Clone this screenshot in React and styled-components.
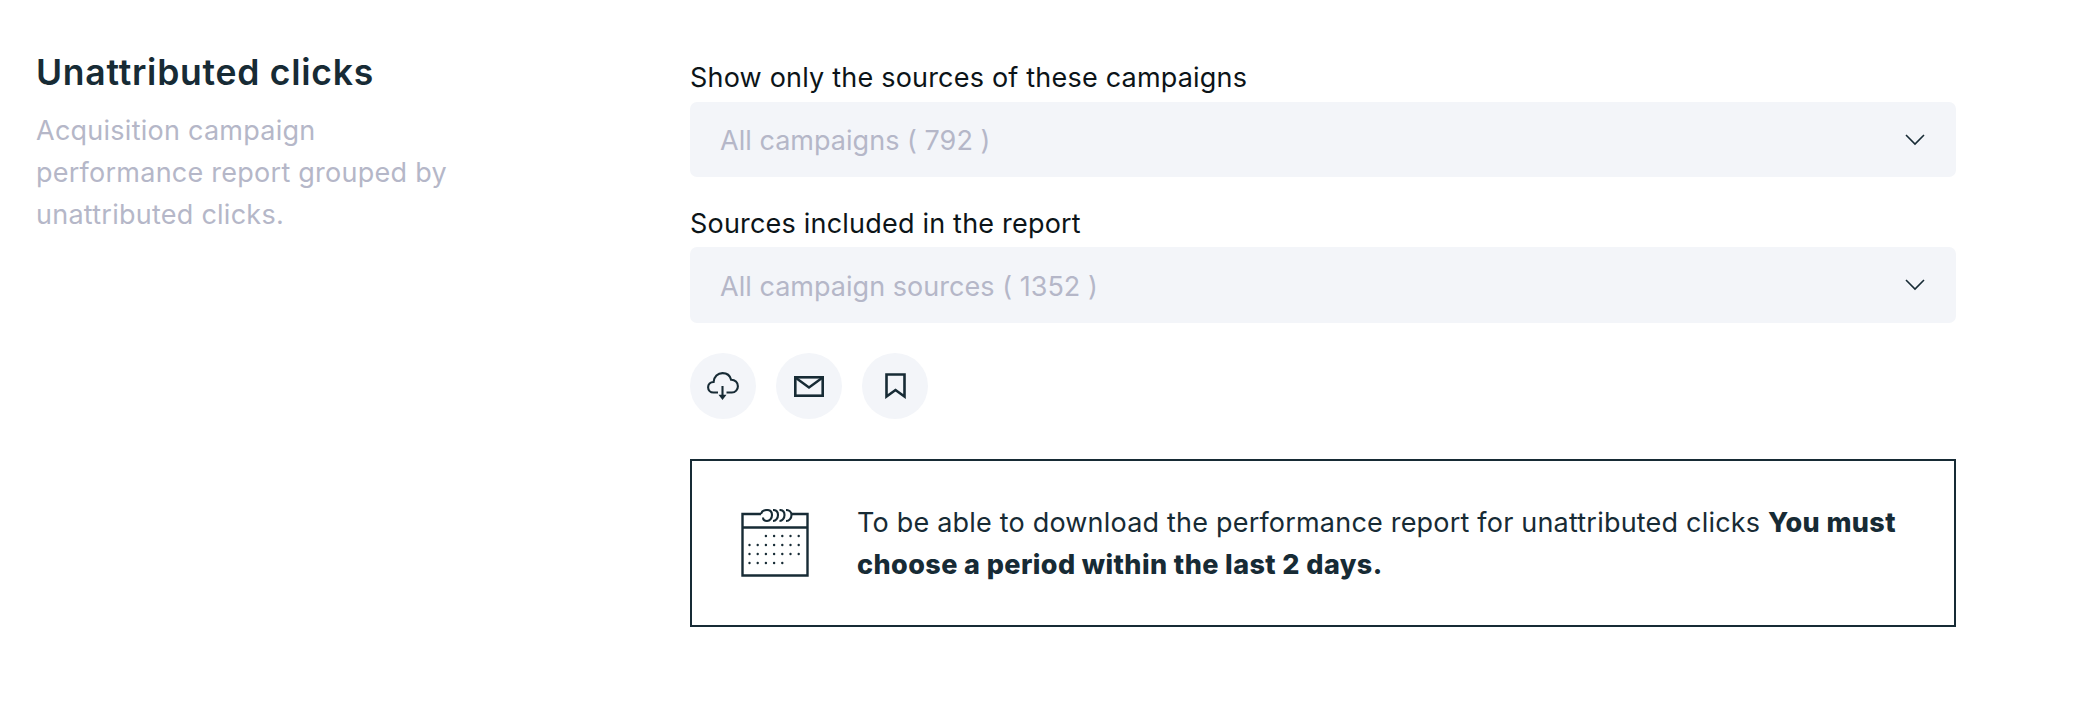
import React from "react";
import styled, { createGlobalStyle } from "styled-components";

const Global = createGlobalStyle`
  html, body { margin: 0; padding: 0; background: #fff; }
  body { font-family: "Inter", "Liberation Sans", sans-serif; }
`;
const Page = styled.div`
  display: grid;
  grid-template-columns: 654px 1266px;
  padding: 0 0 0 36px;
  height: 704px;
  box-sizing: border-box;
`;
const Intro = styled.section`
  padding-top: 51px;
`;
const Title = styled.h2`
  margin: 0;
  font-size: 35.5px;
  line-height: 44px;
  font-weight: 600;
  color: #172b35;
  letter-spacing: 0.75px;
`;
const Description = styled.p`
  margin: 15px 0 0;
  width: 430px;
  font-size: 27px;
  line-height: 42px;
  color: #b5b7c8;
  letter-spacing: 0.25px;
`;
const Main = styled.section`
  padding-top: 56px;
  display: flex;
  flex-direction: column;
`;
const Label = styled.label`
  display: block;
  font-size: 27px;
  line-height: 44px;
  color: #0c1418;
  letter-spacing: 0.2px;
  margin-bottom: ${(p) => p.$gap}px;
`;
const Select = styled.div`
  display: flex;
  align-items: center;
  justify-content: space-between;
  height: ${(p) => p.$h}px;
  margin-bottom: ${(p) => p.$mb}px;
  padding: 0 31px 0 30px;
  border-radius: 7px;
  background: #f3f5f9;
  color: #b5b7c8;
  font-size: 27px;
  letter-spacing: 0.03px;
`;
const SelectText = styled.span`
  padding-top: 2px;
`;
const Actions = styled.div`
  display: flex;
  gap: 20px;
  margin-bottom: 40px;
`;
const Round = styled.button`
  width: 66px;
  height: 66px;
  padding: 0;
  border: 0;
  border-radius: 50%;
  background: #f3f5f9;
  display: flex;
  align-items: center;
  justify-content: center;
`;
const Notice = styled.div`
  box-sizing: border-box;
  height: 168px;
  border: 2px solid #172b35;
  display: flex;
  align-items: center;
  padding: 0 40px 0 49px;
  gap: 48px;
  svg { flex-shrink: 0; }
`;
const NoticeText = styled.p`
  margin: 0;
  padding-top: 2px;
  font-size: 27px;
  line-height: 42px;
  color: #172b35;
  letter-spacing: 0.2px;
  strong { font-weight: 800; letter-spacing: 0.4px; }
`;
const stroke = { fill: "none", stroke: "#172b35", strokeWidth: 2.4 };
const Chevron = () => (
  <svg width="20" height="12" viewBox="0 0 20 12"><path d="M1 1l9 9 9-9" fill="none" stroke="#172b35" strokeWidth="1.6" /></svg>
);
const CloudIcon = () => (
  <svg width="32" height="28" viewBox="0 0 32 28">
    <path {...stroke} strokeWidth="2.1" d="M11 20.5H6.5C3.3 20.5 1.1 18 1.1 15.2S3.3 10.2 6.6 10C7 4.8 10.8 1.1 15.5 1.1c4.3 0 7.6 2.7 8.6 6.6 3.9-.1 6.8 2.8 6.8 6.5 0 3.4-2.5 6.3-6 6.3H19.5" />
    <path {...stroke} strokeWidth="2.1" d="M15.5 14v10" />
    <path d="M11.5 22.8h8L15.5 28z" fill="#172b35" />
  </svg>
);
const MailIcon = () => (
  <svg width="30" height="21" viewBox="0 0 30 21">
    <rect {...stroke} strokeWidth="2.6" x="1.3" y="1.3" width="27.4" height="18.4" />
    <path {...stroke} d="M2 2l13 9.5L28 2" />
  </svg>
);
const BookmarkIcon = () => (
  <svg width="21" height="26" viewBox="0 0 21 26">
    <path {...stroke} strokeWidth="2.6" d="M1.5 1.5h18v22l-9-6.5-9 6.5z" />
  </svg>
);
const dots = [
  [2, 0, 5], [0, 1, 7], [0, 2, 7], [0, 3, 5],
];
const CalendarIcon = () => (
  <svg width="68" height="68" viewBox="0 0 68 68">
    <path {...stroke} d="M20 5H1.5v61.5h65V5H50.5M1.5 18.5h65" />
    <path {...stroke} strokeWidth="2.1" d="M20 5c.8-3 3-4 6-4 3 0 5 2 5 5s-2 6-5 6-4-2-4-3.5M32 1c3 0 5 2 5 5s-2 6-5 6M38.5 1c3 0 5 2 5 5s-2 6-5 6M45 1c3 0 5.5 2 5.5 5s-2 6-5.5 6" />
    {dots.flatMap(([dx, row, count]) =>
      Array.from({ length: count }, (_, i) => (
        <circle key={`${row}-${i}`} cx={8.5 + (dx + i) * 8.2} cy={27 + row * 9} r="1.2" fill="#172b35" />
      ))
    )}
  </svg>
);

export default function App() {
  return (
    <Page>
      <Global />
      <Intro>
        <Title>Unattributed clicks</Title>
        <Description>Acquisition campaign performance report grouped by unattributed clicks.</Description>
      </Intro>
      <Main>
        <Label $gap={2}>Show only the sources of these campaigns</Label>
        <Select $h={75} $mb={25}><SelectText>All campaigns ( 792 )</SelectText><Chevron /></Select>
        <Label $gap={1}>Sources included in the report</Label>
        <Select $h={76} $mb={30}><SelectText>All campaign sources ( 1352 )</SelectText><Chevron /></Select>
        <Actions>
          <Round aria-label="download"><CloudIcon /></Round>
          <Round aria-label="email"><MailIcon /></Round>
          <Round aria-label="save"><BookmarkIcon /></Round>
        </Actions>
        <Notice>
          <CalendarIcon />
          <NoticeText>
            To be able to download the performance report for unattributed clicks <strong>You must choose a period within the last 2 days.</strong>
          </NoticeText>
        </Notice>
      </Main>
    </Page>
  );
}
